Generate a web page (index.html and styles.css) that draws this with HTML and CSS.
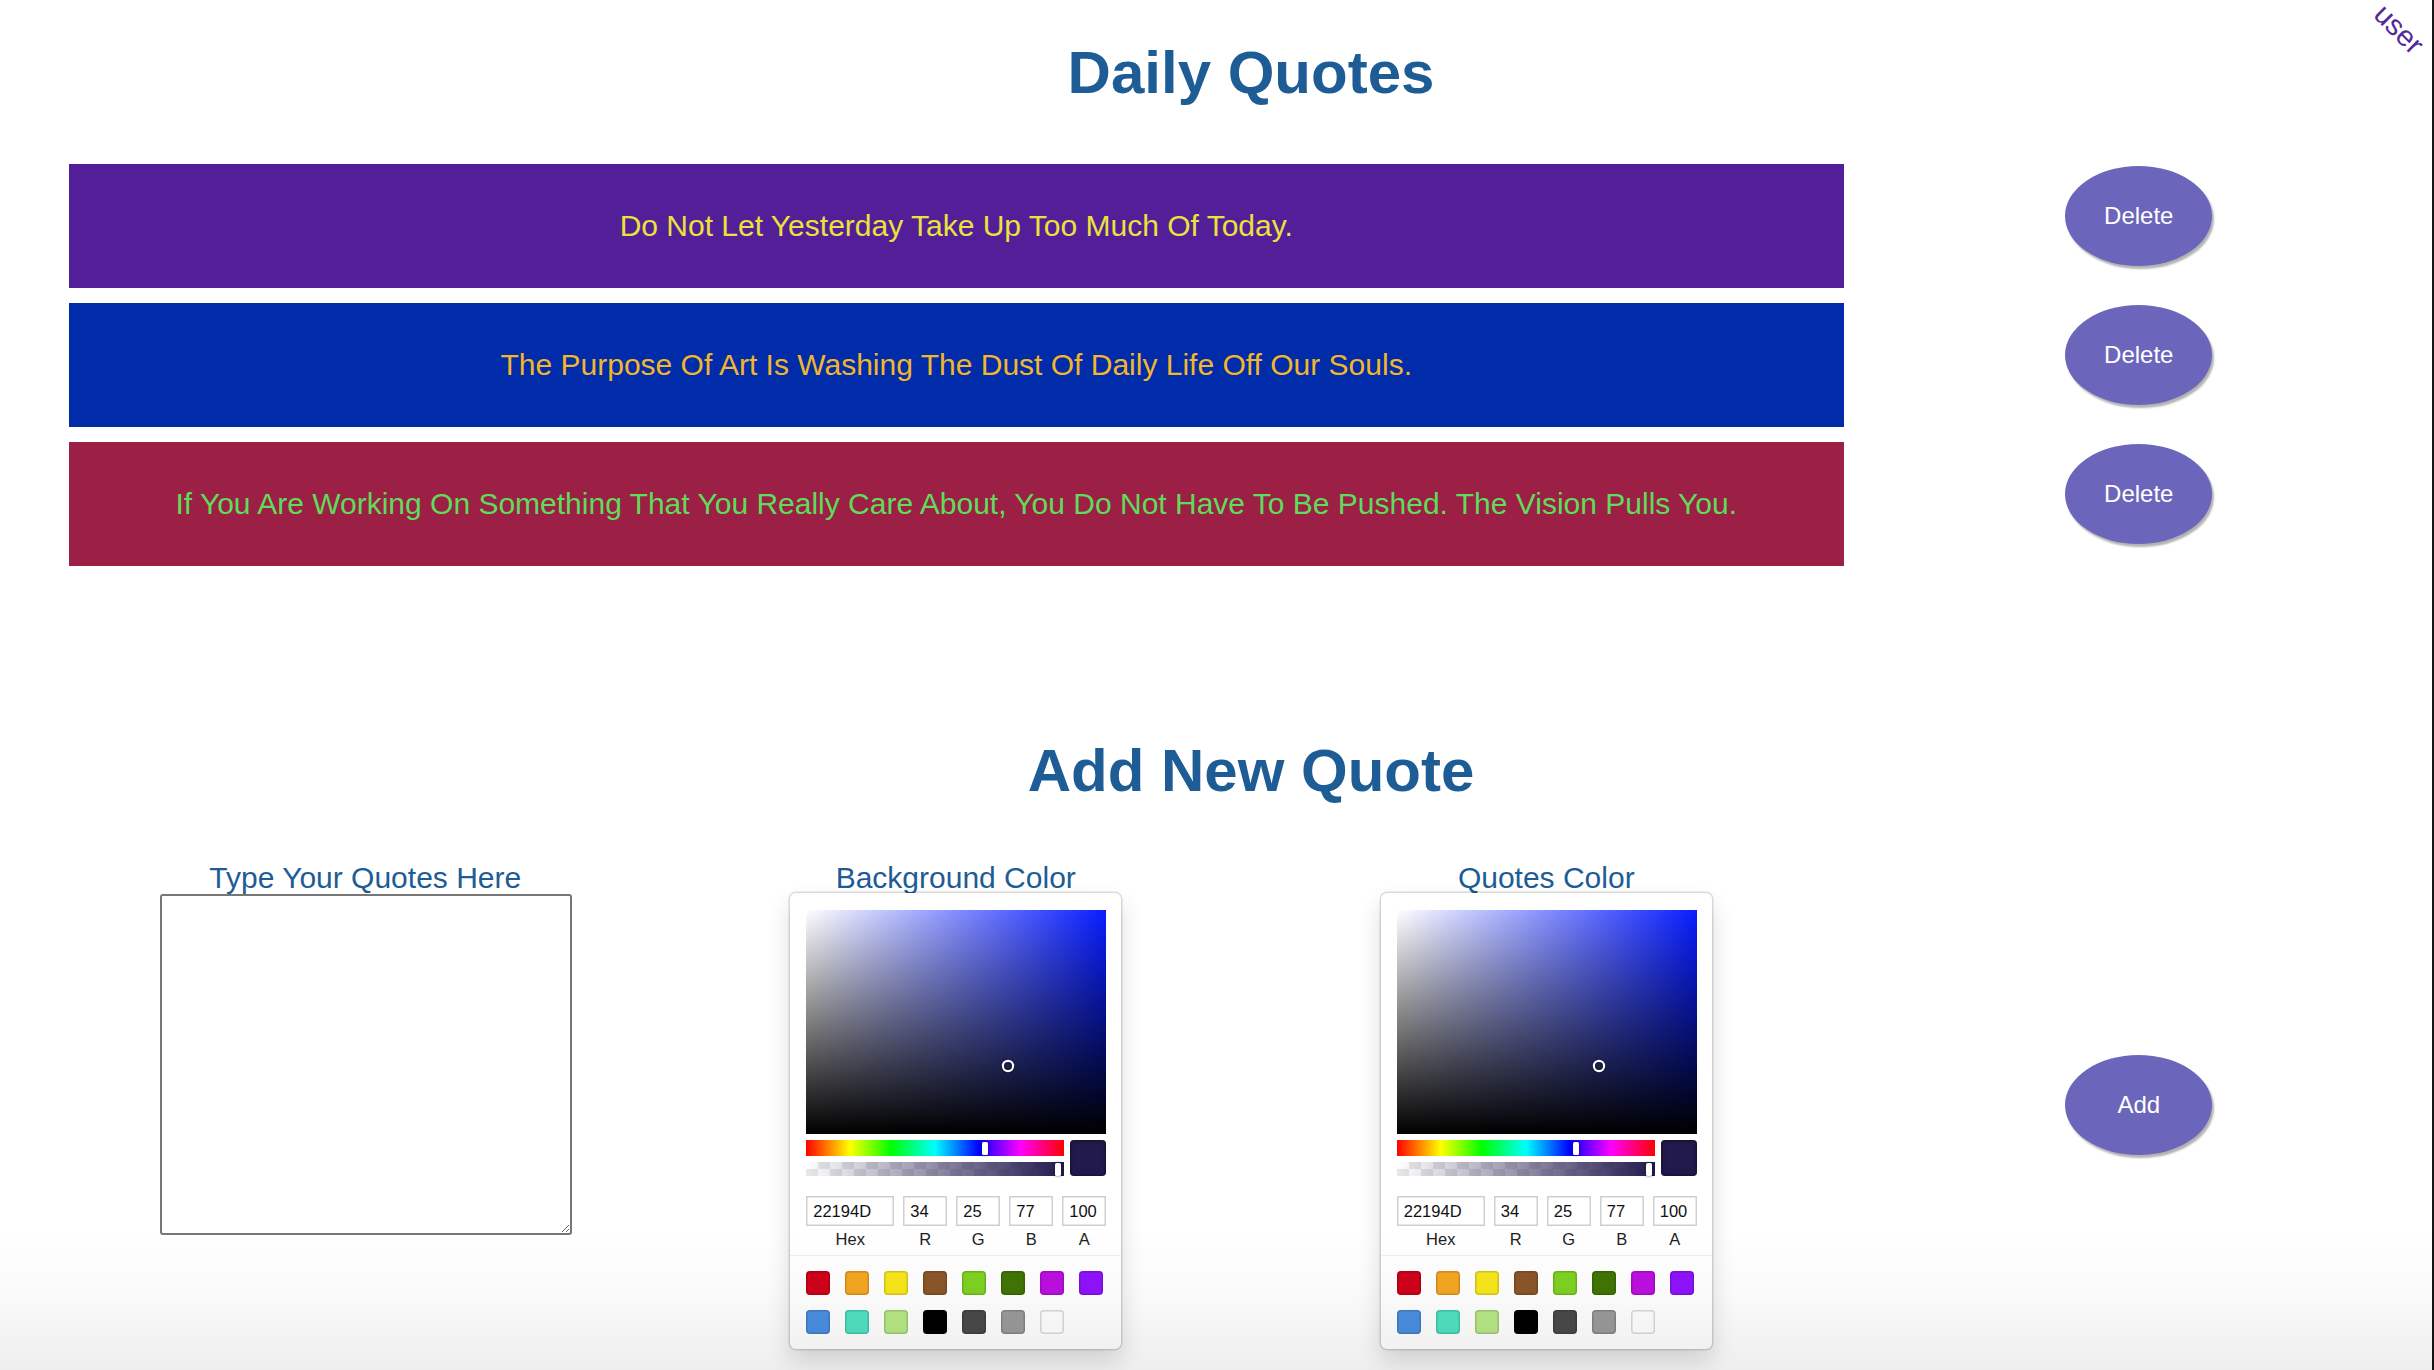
FILE: index.html
```html
<!DOCTYPE html>
<html lang="en">
<head>
<meta charset="utf-8">
<title>Daily Quotes</title>
<link rel="stylesheet" href="styles.css">
</head>
<body>
<div class="page">
  <div class="user-tag">user</div>
  <h1 class="heading heading-top">Daily Quotes</h1>

  <div class="quotes">
    <div class="quote-row">
      <div class="quote-bar bar-purple"><p class="quote-text text-yellow">Do Not Let Yesterday Take Up Too Much Of Today.</p></div>
      <button class="pill-btn">Delete</button>
    </div>
    <div class="quote-row">
      <div class="quote-bar bar-blue"><p class="quote-text text-orange">The Purpose Of Art Is Washing The Dust Of Daily Life Off Our Souls.</p></div>
      <button class="pill-btn">Delete</button>
    </div>
    <div class="quote-row">
      <div class="quote-bar bar-crimson"><p class="quote-text text-green">If You Are Working On Something That You Really Care About, You Do Not Have To Be Pushed. The Vision Pulls You.</p></div>
      <button class="pill-btn">Delete</button>
    </div>
  </div>

  <h1 class="heading heading-add">Add New Quote</h1>

  <div class="form-row">
    <div class="form-col">
      <label class="field-label" for="quote-input">Type Your Quotes Here</label>
      <textarea id="quote-input" class="quote-input"></textarea>
    </div>

    <div class="form-col">
      <div class="field-label">Background Color</div>
      <div class="picker">
        <div class="saturation"><span class="sat-pointer"></span></div>
        <div class="slider-row">
          <div class="sliders">
            <div class="hue"><span class="hue-pointer"></span></div>
            <div class="alpha"><div class="alpha-grad"></div><span class="alpha-pointer"></span></div>
          </div>
          <div class="active-color"></div>
        </div>
        <div class="fields">
          <div class="field field-hex"><div class="field-input">22194D</div><div class="field-name">Hex</div></div>
          <div class="field"><div class="field-input">34</div><div class="field-name">R</div></div>
          <div class="field"><div class="field-input">25</div><div class="field-name">G</div></div>
          <div class="field"><div class="field-input">77</div><div class="field-name">B</div></div>
          <div class="field"><div class="field-input">100</div><div class="field-name">A</div></div>
        </div>
        <div class="presets">
          <span class="swatch" style="background:#D0021B"></span>
          <span class="swatch" style="background:#F5A623"></span>
          <span class="swatch" style="background:#F8E71C"></span>
          <span class="swatch" style="background:#8B572A"></span>
          <span class="swatch" style="background:#7ED321"></span>
          <span class="swatch" style="background:#417505"></span>
          <span class="swatch" style="background:#BD10E0"></span>
          <span class="swatch" style="background:#9013FE"></span>
          <span class="swatch" style="background:#4A90E2"></span>
          <span class="swatch" style="background:#50E3C2"></span>
          <span class="swatch" style="background:#B8E986"></span>
          <span class="swatch" style="background:#000000"></span>
          <span class="swatch" style="background:#4A4A4A"></span>
          <span class="swatch" style="background:#9B9B9B"></span>
          <span class="swatch" style="background:#FFFFFF"></span>
        </div>
      </div>
    </div>

    <div class="form-col">
      <div class="field-label">Quotes Color</div>
      <div class="picker">
        <div class="saturation"><span class="sat-pointer"></span></div>
        <div class="slider-row">
          <div class="sliders">
            <div class="hue"><span class="hue-pointer"></span></div>
            <div class="alpha"><div class="alpha-grad"></div><span class="alpha-pointer"></span></div>
          </div>
          <div class="active-color"></div>
        </div>
        <div class="fields">
          <div class="field field-hex"><div class="field-input">22194D</div><div class="field-name">Hex</div></div>
          <div class="field"><div class="field-input">34</div><div class="field-name">R</div></div>
          <div class="field"><div class="field-input">25</div><div class="field-name">G</div></div>
          <div class="field"><div class="field-input">77</div><div class="field-name">B</div></div>
          <div class="field"><div class="field-input">100</div><div class="field-name">A</div></div>
        </div>
        <div class="presets">
          <span class="swatch" style="background:#D0021B"></span>
          <span class="swatch" style="background:#F5A623"></span>
          <span class="swatch" style="background:#F8E71C"></span>
          <span class="swatch" style="background:#8B572A"></span>
          <span class="swatch" style="background:#7ED321"></span>
          <span class="swatch" style="background:#417505"></span>
          <span class="swatch" style="background:#BD10E0"></span>
          <span class="swatch" style="background:#9013FE"></span>
          <span class="swatch" style="background:#4A90E2"></span>
          <span class="swatch" style="background:#50E3C2"></span>
          <span class="swatch" style="background:#B8E986"></span>
          <span class="swatch" style="background:#000000"></span>
          <span class="swatch" style="background:#4A4A4A"></span>
          <span class="swatch" style="background:#9B9B9B"></span>
          <span class="swatch" style="background:#FFFFFF"></span>
        </div>
      </div>
    </div>

    <div class="form-col form-col-action">
      <button class="pill-btn">Add</button>
    </div>
  </div>
</div>
</body>
</html>
```

FILE: styles.css
```css
* { box-sizing: border-box; }

html, body {
  margin: 0;
  padding: 0;
  background: #ffffff;
}

body {
  font-family: "Liberation Sans", Arial, Helvetica, sans-serif;
  color: #1e5c96;
  overflow: hidden;
}

body::after {
  content: "";
  position: fixed;
  left: 0;
  right: 0;
  bottom: 0;
  height: 140px;
  pointer-events: none;
  background: linear-gradient(to bottom, rgba(0,0,0,0) 0%, rgba(0,0,0,0.02) 45%, rgba(0,0,0,0.065) 100%);
}

.page {
  position: relative;
  min-height: 1370px;
  padding-left: 70px;
  border-right: 2px solid #151515;
}

.user-tag {
  position: absolute;
  top: 13px;
  right: 5px;
  font-size: 29px;
  line-height: 32px;
  color: #55289a;
  transform: rotate(45deg);
}

.heading {
  margin: 0;
  font-size: 60px;
  line-height: 60px;
  font-weight: 700;
  text-align: center;
  color: #1e5c96;
}

.heading-top { padding-top: 43px; }
.heading-add { margin-top: 175px; }

.quotes {
  margin-top: 61px;
  display: flex;
  flex-direction: column;
  gap: 15px;
}

.quote-row {
  display: grid;
  grid-template-columns: repeat(4, 1fr);
  align-items: start;
}

.quote-bar {
  grid-column: 1 / span 3;
  height: 124px;
  margin: 0 -2px 0 -1px;
  display: flex;
  align-items: center;
  justify-content: center;
}

.quote-text {
  margin: 0;
  font-size: 30px;
  line-height: 34px;
  text-align: center;
}

.bar-purple { background: #521f99; }
.bar-blue { background: #002ba9; }
.bar-crimson { background: #9c2045; }
.text-yellow { color: #ebe23b; }
.text-orange { color: #f2b62c; }
.text-green { color: #5fdc5a; }

.pill-btn {
  justify-self: center;
  width: 147px;
  height: 100px;
  margin: 2px 0 0 4px;
  border: none;
  border-radius: 50%;
  background: #6b66bb;
  color: #ffffff;
  font-family: "Liberation Sans", Arial, sans-serif;
  font-size: 24px;
  box-shadow: 2px 3px 2px rgba(0,0,0,0.3);
  padding: 0;
}

.form-row {
  margin-top: 59px;
  display: grid;
  grid-template-columns: repeat(4, 1fr);
  align-items: start;
}

.form-col {
  display: flex;
  flex-direction: column;
  align-items: center;
}

.form-col-action {
  align-self: center;
}

.form-col-action .pill-btn { margin-top: 0; }

.field-label {
  display: block;
  padding-top: 3px;
  font-size: 30px;
  line-height: 30px;
  text-align: center;
  color: #1e5c96;
}

.quote-input {
  margin-top: 1px;
  margin-left: 2px;
  width: 412px;
  height: 341px;
  border: 2px solid #767676;
  border-radius: 3px;
  background: #fff;
  resize: both;
}

/* colour picker */
.picker {
  width: 331px;
  background: #ffffff;
  border-radius: 6px;
  padding: 17px 15px 0 16px;
  box-shadow: 0 0 0 1.5px rgba(0,0,0,0.13), 0 12px 24px rgba(0,0,0,0.14);
}

.saturation {
  position: relative;
  height: 224px;
  background:
    linear-gradient(to top, #000 0%, rgba(0,0,0,0) 100%),
    linear-gradient(to right, #fff 0%, rgba(255,255,255,0) 100%),
    rgb(8, 30, 255);
}

.sat-pointer {
  position: absolute;
  left: 202px;
  top: 156px;
  width: 8px;
  height: 8px;
  margin: -4px 0 0 -4px;
  border-radius: 50%;
  box-shadow: 0 0 0 2.2px #fff, inset 0 0 1px 1px rgba(0,0,0,0.3), 0 0 1px 3px rgba(0,0,0,0.3);
}

.slider-row {
  margin-top: 6px;
  display: flex;
  gap: 6px;
}

.sliders {
  flex: 1;
  display: flex;
  flex-direction: column;
  gap: 6px;
}

.hue {
  position: relative;
  height: 16px;
  background: linear-gradient(to right, #f00 0%, #ff0 17%, #0f0 33%, #0ff 50%, #00f 67%, #f0f 83%, #f00 100%);
}

.hue-pointer {
  position: absolute;
  left: 176px;
  top: 2px;
  width: 6px;
  height: 13px;
  border-radius: 1.5px;
  background: #fff;
  box-shadow: 0 0 3px rgba(0,0,0,0.6);
}

.alpha {
  position: relative;
  height: 14px;
  background-color: #fff;
  background-image: conic-gradient(#e8e8e8 25%, #ffffff 0 50%, #e8e8e8 0 75%, #ffffff 0);
  background-size: 24px 14px;
  background-position: 0 0;
}

.alpha-grad {
  height: 100%;
  background: linear-gradient(to right, rgba(34,25,77,0) 0%, rgb(34,25,77) 100%);
}

.alpha-pointer {
  position: absolute;
  right: 3px;
  top: 1px;
  width: 6px;
  height: 13px;
  border-radius: 1.5px;
  background: #fff;
  box-shadow: 0 0 3px rgba(0,0,0,0.6);
}

.active-color {
  width: 36px;
  height: 36px;
  border-radius: 4px;
  background: #22194d;
  box-shadow: inset 0 0 0 1.5px rgba(0,0,0,0.15), inset 0 0 6px rgba(0,0,0,0.25);
}

.fields {
  margin-top: 20px;
  display: flex;
  gap: 9px;
}

.field { flex: 1; }
.field-hex { flex: 2; }

.field-input {
  height: 30px;
  line-height: 30px;
  padding-left: 7px;
  font-size: 16.5px;
  color: #111;
  box-shadow: inset 0 0 0 1.5px #cfcfcf;
}

.field-name {
  padding-top: 4px;
  line-height: 19px;
  font-size: 16.5px;
  text-align: center;
  color: #222;
}

.presets {
  margin: 6px -15px 0 -16px;
  padding: 15px 0 0 16px;
  border-top: 1.5px solid #eeeeee;
  display: flex;
  flex-wrap: wrap;
}

.swatch {
  width: 24px;
  height: 24px;
  margin: 0 15px 15px 0;
  border-radius: 4px;
  box-shadow: inset 0 0 0 1.5px rgba(0,0,0,0.15);
}
```
